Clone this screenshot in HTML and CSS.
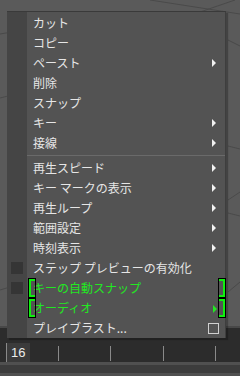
FILE: index.html
```html
<!DOCTYPE html>
<html lang="ja">
<head>
<meta charset="utf-8">
<link rel="stylesheet" href="styles.css">
</head>
<body>
<div class="screen">
  <div class="viewport">
    <svg class="grid" width="240" height="326" viewBox="0 0 240 326">
      <g stroke="#4a4a4a" stroke-width="1" fill="none">
        <path d="M0 34 L30 29"/>
        <path d="M0 98 L12 95"/>
        <path d="M235 0 L200 12"/>
        <path d="M150 0 L240 14"/>
        <path d="M228 40 L240 46"/>
        <path d="M228 146 L240 149"/>
        <path d="M228 200 L240 192"/>
        <path d="M228 213 L240 216"/>
        <path d="M228 292 L240 282"/>
        <path d="M0 290 L10 287"/>
      </g>
    </svg>
  </div>
  <div class="timeline">
    <div class="labels">
      <span class="lbl">16</span><span class="lbl">18</span><span class="lbl">20</span><span class="lbl">22</span><span class="lbl">24</span>
    </div>
    <div class="ticks">
      <div class="cur">16</div>
      <div class="tick t1"></div>
      <div class="tick t2"></div>
      <div class="tick t3"></div>
      <div class="tick t4"></div>
    </div>
    <div class="band1"></div>
    <div class="band2"></div>
  </div>

  <div class="menu">
    <div class="item"><span class="txt">カット</span></div>
    <div class="item"><span class="txt">コピー</span></div>
    <div class="item"><span class="txt">ペースト</span><span class="arrow"></span></div>
    <div class="item"><span class="txt">削除</span></div>
    <div class="item"><span class="txt">スナップ</span></div>
    <div class="item"><span class="txt">キー</span><span class="arrow"></span></div>
    <div class="item"><span class="txt">接線</span><span class="arrow"></span></div>
    <div class="sep"></div>
    <div class="item"><span class="txt">再生スピード</span><span class="arrow"></span></div>
    <div class="item"><span class="txt">キー マークの表示</span><span class="arrow"></span></div>
    <div class="item"><span class="txt">再生ループ</span><span class="arrow"></span></div>
    <div class="item"><span class="txt">範囲設定</span><span class="arrow"></span></div>
    <div class="item"><span class="txt">時刻表示</span><span class="arrow"></span></div>
    <div class="item"><span class="chk"></span><span class="txt">ステップ プレビューの有効化</span></div>
    <div class="item hl"><span class="chk"></span><span class="brl"></span><span class="txt green">キーの自動スナップ</span><span class="brr"></span></div>
    <div class="item hl"><span class="brl"></span><span class="txt green">オーディオ</span><span class="arrow garrow"></span><span class="brr"></span></div>
    <div class="item"><span class="txt">プレイブラスト...</span><span class="box"></span></div>
  </div>
</div>
</body>
</html>
```

FILE: styles.css
```css
* { box-sizing: border-box; }
html, body { margin: 0; padding: 0; }
body {
  width: 240px;
  height: 376px;
  overflow: hidden;
  background: #5a5a5a;
  font-family: "Noto Sans CJK JP", "Noto Sans", sans-serif;
}
.screen {
  position: relative;
  width: 240px;
  height: 376px;
  display: flex;
  flex-direction: column;
}
.viewport {
  position: relative;
  height: 328px;
  background: #5a5a5a;
  border-bottom: 2px solid #484848;
}
.grid { position: absolute; left: 0; top: 0; }
.timeline {
  flex: 1;
  background: #2c2c2c;
  display: flex;
  flex-direction: column;
}
.labels {
  height: 13px;
  display: flex;
  font-family: "Liberation Sans", sans-serif;
  font-size: 12px;
  color: #8a8a8a;
  line-height: 13px;
  padding-left: 10px;
}
.lbl { width: 52.5px; }
.ticks {
  position: relative;
  height: 21px;
  display: flex;
  align-items: flex-end;
}
.cur {
  width: 24px;
  height: 19px;
  margin-left: 6px;
  background: #3b3b3b;
  border-left: 1px solid #8a8a8a;
  color: #ececec;
  font-family: "Liberation Sans", sans-serif;
  font-size: 13px;
  line-height: 19px;
  padding-left: 4px;
}
.tick {
  position: absolute;
  top: 5px;
  width: 1px;
  height: 15px;
  background: #8a8a8a;
}
.t1 { left: 58px; }
.t2 { left: 110px; }
.t3 { left: 163px; }
.t4 { left: 215px; }
.band1 { height: 3px; background: #505050; }
.band2 { flex: 1; background: #3c3c3c; border-bottom: 3px solid #505050; }

.menu {
  position: absolute;
  left: 7px;
  top: 11px;
  width: 219px;
  padding-top: 1px;
  background: linear-gradient(to right, #454545 0, #454545 20px, #535353 20px);
  border-top: 1px solid #3a3a3a;
  border-right: 1px solid #3e3e3e;
  box-shadow: 2px 2px 1px rgba(0,0,0,0.25);
}
.item {
  position: relative;
  height: 20px;
  display: flex;
  align-items: center;
  padding-left: 26px;
}
.txt {
  font-size: 12px;
  line-height: 20px;
  color: #e6e6e6;
  white-space: nowrap;
}
.txt.green { color: #22e822; }
.arrow {
  position: absolute;
  left: 205px;
  top: 6px;
  width: 0;
  height: 0;
  border-top: 4px solid transparent;
  border-bottom: 4px solid transparent;
  border-left: 4px solid #f2f2f2;
}
.garrow { border-left-color: #22e822; left: 206px; top: 7px; }
.sep {
  height: 5px;
  border-top: 2px solid #535353;
  border-bottom: 2px solid #535353;
  background: #6a6a6a;
  margin-left: 20px;
}
.chk {
  position: absolute;
  left: 4px;
  top: 4px;
  width: 12px;
  height: 12px;
  background: #353535;
}
.brl, .brr {
  position: absolute;
  top: 1px;
  width: 6px;
  height: 18px;
  border: 2px solid #10f010;
  outline: 1px solid #000;
}
.brl { left: 22px; border-right: none; }
.brr { left: 212px; border-left: none; }
.box {
  position: absolute;
  left: 201px;
  top: 5px;
  width: 11px;
  height: 11px;
  border: 1px solid #d0d0d0;
}
```
